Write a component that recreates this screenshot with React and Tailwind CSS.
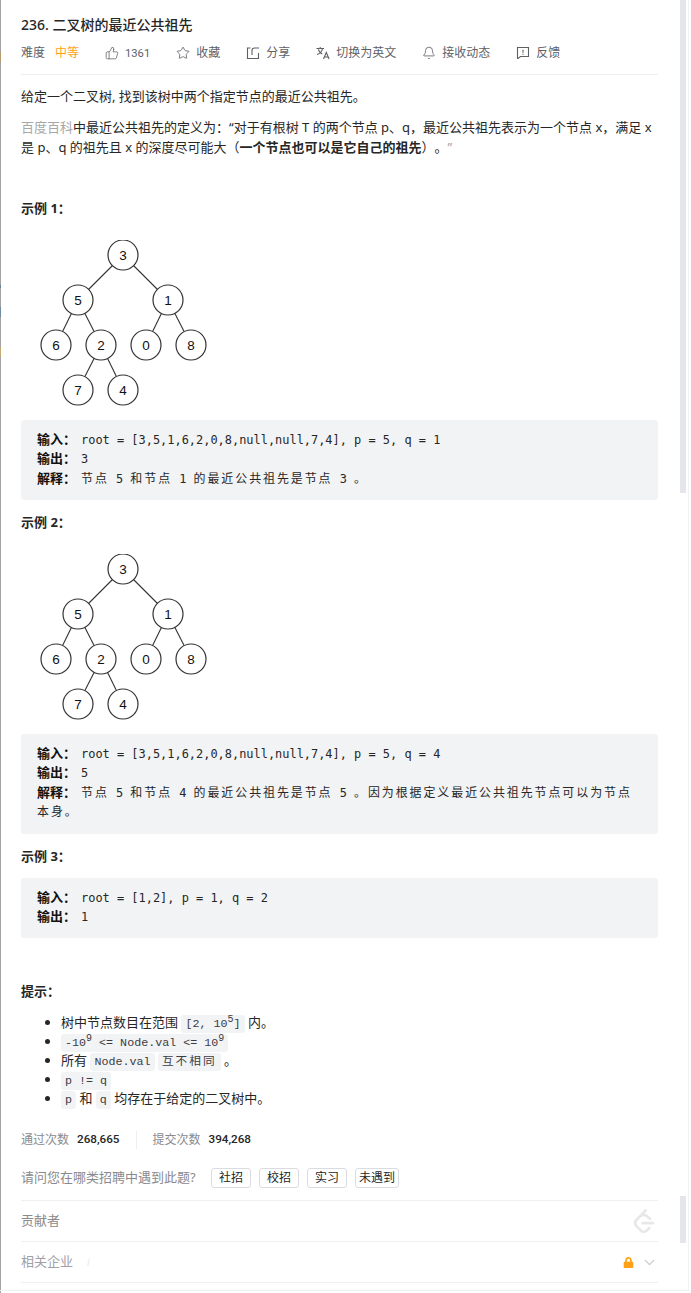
import React from 'react';
import { ThumbsUp, Star, Bell, ChevronDown } from 'lucide-react';
import { SiLeetcode } from 'react-icons/si';
import { FaLock } from 'react-icons/fa';

const nodes = [
  ['3', 102, 15], ['5', 57, 60], ['1', 147, 60],
  ['6', 35, 105], ['2', 80, 105], ['0', 125, 105], ['8', 170, 105],
  ['7', 57, 150], ['4', 102, 150],
];
const edges = [[0, 1], [0, 2], [1, 3], [1, 4], [2, 5], [2, 6], [4, 7], [4, 8]];

function Tree() {
  return (
    <svg width="210" height="170" viewBox="0 0 210 170" className="block">
      {edges.map(([a, b]) => (
        <line key={a + '-' + b} x1={nodes[a][1]} y1={nodes[a][2]} x2={nodes[b][1]} y2={nodes[b][2]} stroke="#333" strokeWidth="1.1" />
      ))}
      {nodes.map(([t, x, y]) => (
        <g key={t}>
          <circle cx={x} cy={y} r="15" fill="#fff" stroke="#333" strokeWidth="1.2" />
          <text x={x} y={y + 5} textAnchor="middle" fontSize="13.5" fill="#111" fontFamily="'Liberation Sans', sans-serif">{t}</text>
        </g>
      ))}
    </svg>
  );
}

const Cjk = ({ children }) => <span className="tracking-[1.95px]">{children}</span>;
const Label = ({ children }) => <strong className="font-bold text-[13px] text-[#111] mr-[5px]">{children}</strong>;
const Line = ({ children }) => <div className="h-[19.5px]">{children}</div>;

function Pre({ children }) {
  return (
    <div className="bg-[#f2f3f5] rounded-[3px] pt-[9.5px] pb-[12px] px-[16px] font-['DejaVu_Sans_Mono','Noto_Sans_CJK_SC',monospace] text-[11.95px] leading-[19.5px] text-[#262626]">
      {children}
    </div>
  );
}

const Code = ({ children, className = '' }) => (
  <code className={"bg-[#f2f3f5] rounded-[3px] px-[4px] py-[2px] font-['Liberation_Mono','Noto_Sans_CJK_SC',monospace] text-[11.7px] text-[#3c3c43] " + className}>{children}</code>
);

const Sup = ({ children }) => <sup className="text-[10px]">{children}</sup>;

const Heading = ({ children, className }) => (
  <p className={'font-bold text-[13px] leading-[20px] text-[#262626] ' + className}>{children}</p>
);

function Meta({ icon, children, className = '' }) {
  return (
    <div className={'flex items-center gap-[6px] text-[12px] text-[#5f5f66] ' + className}>
      {icon}
      <span>{children}</span>
    </div>
  );
}

const ShareIcon = (
  <svg width="14" height="14" viewBox="0 0 14 14" fill="none" stroke="#5f5f66" strokeWidth="1.1">
    <path d="M4.5 2H1.5v10.5h11V7" />
    <path d="M6 9V4.5A2.5 2.5 0 0 1 8.5 2H13" />
  </svg>
);
const TranslateIcon = (
  <svg width="14" height="14" viewBox="0 0 14 14" fill="none" stroke="#5f5f66" strokeWidth="1.1">
    <path d="M.5 2.5h7.5M4.2 1v1.5M6.5 2.5C6 5 4 7.5 1 8.5M2.3 3.5c.7 2 2 3.5 4 4.5" />
    <path d="M7.5 13l2.8-6.5L13.1 13M8.5 11h3.6" />
  </svg>
);
const FeedbackIcon = (
  <svg width="14" height="14" viewBox="0 0 14 14" fill="none" stroke="#5f5f66" strokeWidth="1.1">
    <path d="M1.5 1.5h11v9H4.5L2 12.5H1.5z" />
    <path d="M7 3.8v3M7 7.8v1" />
  </svg>
);

const Tag = ({ children, className }) => (
  <button className={'h-[20px] rounded-[3px] border border-[#d9dce1] text-[12px] leading-[18px] text-[#262626] bg-white text-center ' + className}>{children}</button>
);

export default function App() {
  return (
    <div className="relative w-[691px] h-[1293px] overflow-hidden bg-white font-['Noto_Sans','Noto_Sans_CJK_SC',sans-serif] [text-spacing-trim:space-all]">
      {/* window edges + scrollbar pieces */}
      <div className="absolute left-0 top-0 bottom-0 w-px bg-[#a3a3a3]" />
      <div className="absolute left-0 top-[52px] w-px h-[10px] bg-[#b89a6e]" />
      <div className="absolute left-0 top-[285px] w-px h-[3px] bg-[#6f7f9a]" />
      <div className="absolute left-0 top-[307px] w-px h-[10px] bg-[#6f8aa0]" />
      <div className="absolute left-0 top-[347px] w-px h-[10px] bg-[#c4a878]" />
      <div className="absolute left-[688px] top-0 h-[1290px] w-px bg-[#f0f0f0]" />
      <div className="absolute left-0 top-[1290px] w-[689px] h-px bg-[#f0f0f0]" />
      <div className="absolute left-[680px] top-0 w-[6px] h-[493px] bg-[#e5e6eb]" />
      <div className="absolute left-[680px] top-[1196px] w-[6px] h-[47px] bg-[#e5e6eb]" />

      <div className="w-[637px] ml-[21px]">
        <h1 className="pt-[15px] text-[14px] leading-[20px] font-medium text-[#262626]">236. 二叉树的最近公共祖先</h1>

        <div className="mt-[8px] h-[20px] flex items-center gap-[26px]">
          <div className="flex items-center gap-[10px] text-[12px]">
            <span className="text-[#5f5f66]">难度</span>
            <span className="text-[#ffa116]">中等</span>
          </div>
          <Meta icon={<ThumbsUp size={14} strokeWidth={1.3} />}><span className="font-['Roboto'] text-[11.2px]">1361</span></Meta>
          <Meta icon={<Star size={14} strokeWidth={1.4} />}>收藏</Meta>
          <Meta icon={ShareIcon}>分享</Meta>
          <Meta icon={TranslateIcon}>切换为英文</Meta>
          <Meta icon={<Bell size={14} strokeWidth={1.4} />}>接收动态</Meta>
          <Meta icon={FeedbackIcon}>反馈</Meta>
        </div>

        <div className="mt-[11px] border-t border-[#eeeeee] pt-[11px] text-[13px] leading-[20px] text-[#262626]">
          <p>给定一个二叉树, 找到该树中两个指定节点的最近公共祖先。</p>
          <p className="mt-[12px] leading-[19.5px]">
            <span className="text-[#a8a8a8]">百度百科</span>中最近公共祖先的定义为：“对于有根树 T 的两个节点 p、q，最近公共祖先表示为一个节点 x，满足 x 是 p、q 的祖先且 x 的深度尽可能大（<strong className="font-bold">一个节点也可以是它自己的祖先</strong>）。<span className="text-[#a8a8a8]">”</span>
          </p>
        </div>

        <Heading className="mt-[41px]">示例 1：</Heading>
        <div className="mt-[22px]"><Tree /></div>
        <div className="mt-[10px]">
          <Pre>
            <Line><Label>输入：</Label>root = [3,5,1,6,2,0,8,null,null,7,4], p = 5, q = 1</Line>
            <Line><Label>输出：</Label>3</Line>
            <Line><Label>解释：</Label><Cjk>节点</Cjk> 5 <Cjk>和节点</Cjk> 1 <Cjk>的最近公共祖先是节点</Cjk> 3 <Cjk>。</Cjk></Line>
          </Pre>
        </div>

        <Heading className="mt-[12px]">示例 2：</Heading>
        <div className="mt-[22px]"><Tree /></div>
        <div className="mt-[10px]">
          <Pre>
            <Line><Label>输入：</Label>root = [3,5,1,6,2,0,8,null,null,7,4], p = 5, q = 4</Line>
            <Line><Label>输出：</Label>5</Line>
            <div className="h-[39.5px]"><Label>解释：</Label><Cjk>节点</Cjk> 5 <Cjk>和节点</Cjk> 4 <Cjk>的最近公共祖先是节点</Cjk> 5 <Cjk>。因为根据定义最近公共祖先节点可以为节点本身。</Cjk></div>
          </Pre>
        </div>

        <Heading className="mt-[12px]">示例 3：</Heading>
        <div className="mt-[12px]">
          <div className="bg-[#f2f3f5] rounded-[3px] h-[60px] pt-[9.5px] px-[16px] font-['DejaVu_Sans_Mono','Noto_Sans_CJK_SC',monospace] text-[11.95px] leading-[19.5px] text-[#262626]">
            <Line><Label>输入：</Label>root = [1,2], p = 1, q = 2</Line>
            <Line><Label>输出：</Label>1</Line>
          </div>
        </div>

        <Heading className="mt-[43px]">提示：</Heading>
        <ul className="mt-[11.5px] pl-[40px] list-disc text-[13px] leading-[19px] text-[#262626]">
          <li className="h-[19px]">树中节点数目在范围 <Code>[2, 10<Sup>5</Sup>]</Code> 内。</li>
          <li className="h-[19px]"><Code>-10<Sup>9</Sup> &lt;= Node.val &lt;= 10<Sup>9</Sup></Code></li>
          <li className="h-[19px]">所有 <Code>Node.val</Code> <Code className="tracking-[2px]">互不相同</Code> 。</li>
          <li className="h-[19px]"><Code>p != q</Code></li>
          <li className="h-[19px]"><Code>p</Code> 和 <Code>q</Code> 均存在于给定的二叉树中。</li>
        </ul>

        <div className="mt-[22.5px] h-[20px] flex items-center text-[12px]">
          <span className="text-[#8a8a8e]">通过次数</span>
          <span className="ml-[8px] font-['Roboto'] font-medium text-[11.7px] text-[#262626]">268,665</span>
          <span className="mx-[16px] w-px h-[18px] bg-[#eeeeee]" />
          <span className="text-[#8a8a8e]">提交次数</span>
          <span className="ml-[8px] font-['Roboto'] font-medium text-[11.7px] text-[#262626]">394,268</span>
        </div>

        <div className="mt-[18px] h-[20px] flex items-center text-[13px] text-[#8a8a8e]">
          <span className="w-[190px]">请问您在哪类招聘中遇到此题?</span>
          <div className="flex gap-[8px]">
            <Tag className="w-[40px]">社招</Tag>
            <Tag className="w-[40px]">校招</Tag>
            <Tag className="w-[40px]">实习</Tag>
            <Tag className="w-[44px]">未遇到</Tag>
          </div>
        </div>

        <div className="mt-[12px] border-t border-[#f0f0f0] h-[41px] flex items-center justify-between text-[13px] text-[#8a8a8e]">
          <span>贡献者</span>
          <SiLeetcode size={24} className="mr-[2px] text-[#e8e8ea]" />
        </div>
        <div className="border-t border-b border-[#f0f0f0] h-[42px] flex items-center justify-between text-[13px] text-[#a0a0a5]">
          <div className="flex items-center gap-[14px]">
            <span>相关企业</span>
            <span className="text-[10px] italic text-[#e8e8e8]">i</span>
          </div>
          <div className="flex items-center gap-[7px]">
            <FaLock size={11} className="text-[#ffa116]" />
            <ChevronDown size={17} strokeWidth={1.8} className="text-[#c8c8d0]" />
          </div>
        </div>
      </div>
    </div>
  );
}
